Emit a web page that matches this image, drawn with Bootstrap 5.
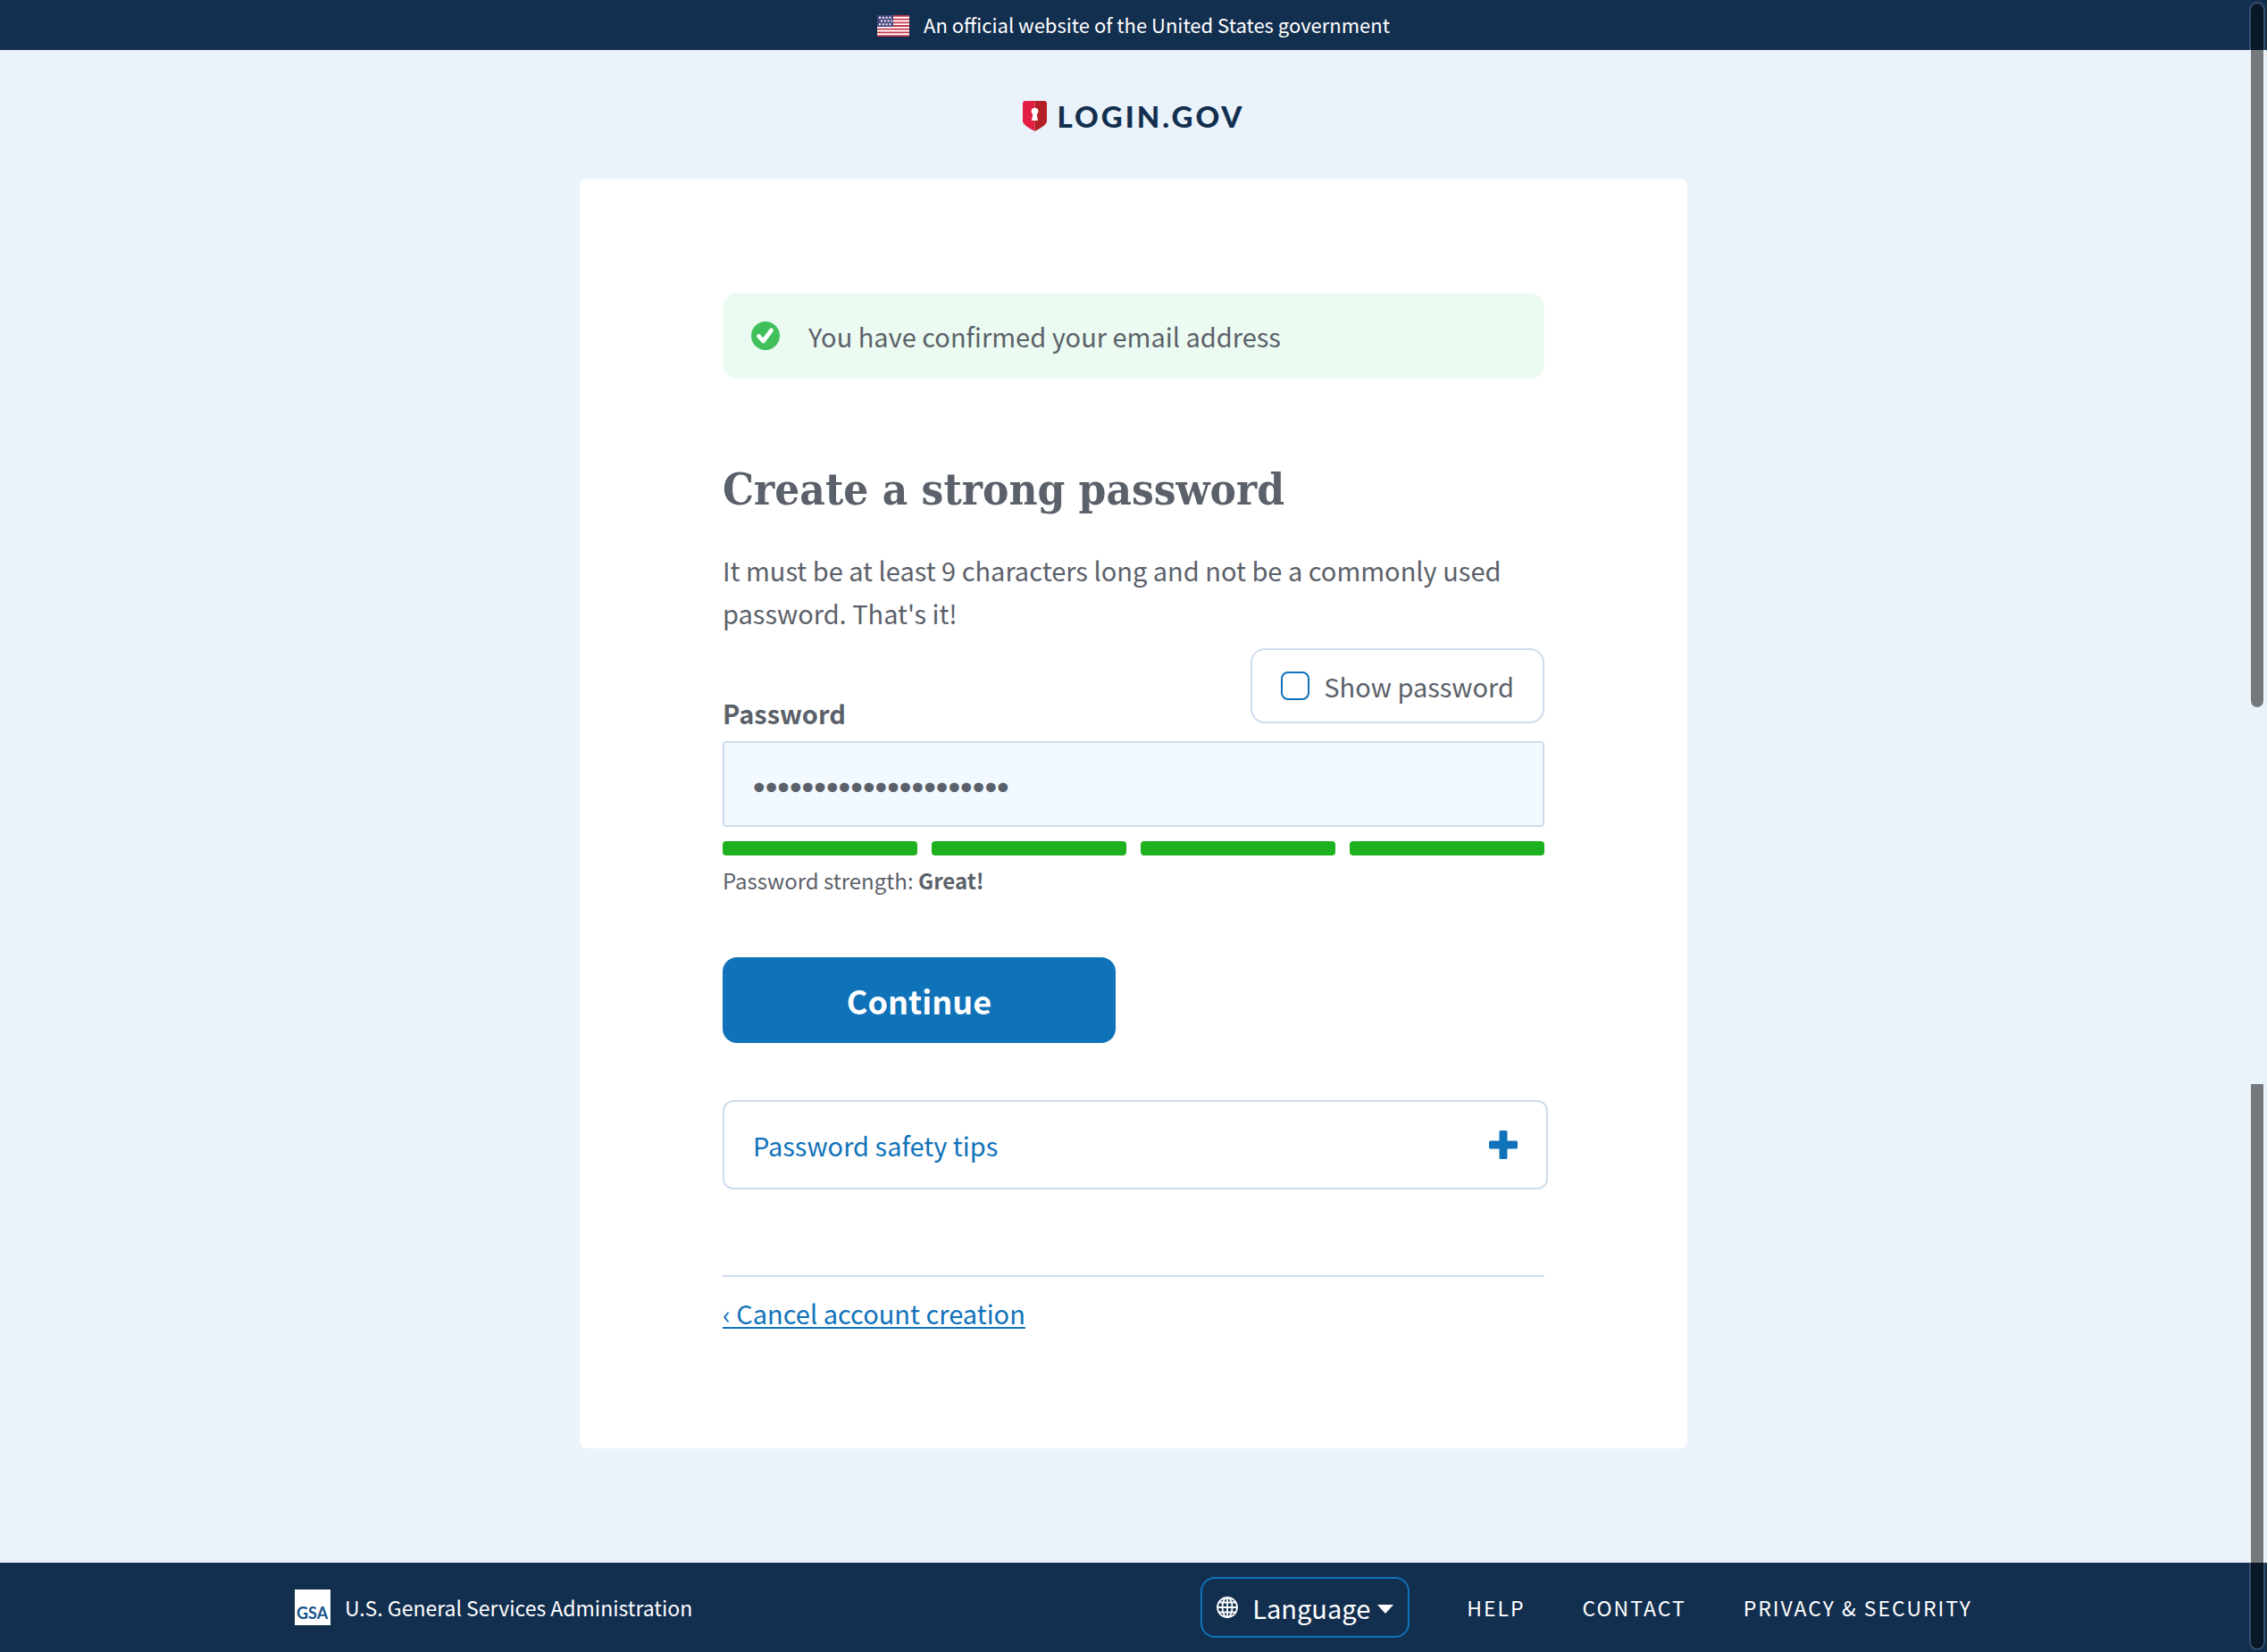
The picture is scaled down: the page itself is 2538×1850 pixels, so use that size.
<!DOCTYPE html>
<html lang="en">
<head>
<meta charset="utf-8">
<meta name="viewport" content="width=device-width, initial-scale=1">
<title>Create a strong password - Login.gov</title>
<link href="https://cdn.jsdelivr.net/npm/bootstrap@5.3.0/dist/css/bootstrap.min.css" rel="stylesheet">
<style>
  :root { --navy: #132f4f; --blue: #1072b9; --line: #cfdcec; --ink: #5b616a; }
  body { background: #eaf2fa; color: var(--ink); font-family: "Noto Sans CJK SC", "Open Sans", sans-serif; font-size: 29px; line-height: 48px; }
  .gov-banner { background: var(--navy); height: 56px; padding-bottom: 2px; font-size: 22px; line-height: 32px; gap: 16px; }
  .brand-bar { height: 144px; padding-top: 4px; gap: 12px; }
  .brand-name { font-family: Lato, sans-serif; font-weight: 900; font-size: 33px; line-height: 40px; letter-spacing: 3px; color: var(--navy); }
  .panel { max-width: 1240px; border-radius: 8px; padding: 128px 160px; margin-bottom: 128px; }
  .notice { background: #ebfbf1; border-radius: 16px; padding: 24px 32px; gap: 32px; margin-bottom: 88px; }
  h1 { font-family: "DejaVu Serif Condensed", "DejaVu Serif", serif; font-weight: 700; font-size: 49px; line-height: 72px; margin-bottom: 30px; }
  .intro { margin-bottom: 16px; }
  .show-toggle { border: 2px solid var(--line); border-radius: 16px; padding: 16px 32px; margin-bottom: 20px; gap: 16px; }
  .show-toggle .form-check-input { width: 32px; height: 32px; border: 2px solid var(--blue); border-radius: 8px; }
  .field-label { margin-bottom: 8px; }
  .pw-input, .pw-input:focus { background: #f2f9ff; border: 2px solid var(--line); border-radius: 4px; height: 96px; padding: 8px 32px 0; font-family: "Liberation Sans", Arial, sans-serif; font-size: 39px; color: var(--ink); }
  .meter { gap: 16px; margin: 16px 0 12px; }
  .meter span { height: 16px; border-radius: 4px; background: #1db11f; }
  .strength { font-size: 24px; line-height: 32px; margin-bottom: 70px; }
  .btn-continue, .btn-continue:hover { background: var(--blue); color: #fff; width: 440px; max-width: 100%; height: 96px; border-radius: 16px; font-size: 36px; line-height: 48px; font-weight: 700; }
  .tips { border: 2px solid var(--line); border-radius: 12px; width: calc(100% + 4px); height: 100px; padding: 0 32px; margin: 64px 0 96px; color: var(--blue); }
  .cancel { border-top: 2px solid var(--line); padding-top: 16px; }
  .cancel a { color: var(--blue); text-decoration-thickness: 2px; text-underline-offset: 3px; }
  .site-footer { background: var(--navy); min-height: 100px; font-size: 23px; line-height: 32px; }
  .footer-inner { max-width: 1878px; }
  .btn-lang, .btn-lang:hover { border: 2px solid var(--blue); border-radius: 16px; height: 68px; padding: 0 16px; color: #fff; font-size: 29px; line-height: 40px; }
  .footer-links { gap: 64px; }
  .footer-links a { letter-spacing: 2px; }
  .thumb { right: 2px; width: 18px; border: 2px solid rgba(255,255,255,.15); background: rgba(0,0,0,.5); background-clip: padding-box; }
  .thumb-upper { top: 2px; height: 792px; border-radius: 9px; }
  .thumb-lower { top: 1214px; bottom: 2px; border-top: 0; border-radius: 0 0 9px 9px; }
</style>
<script src="https://cdn.jsdelivr.net/npm/bootstrap@5.3.0/dist/js/bootstrap.bundle.min.js"></script>
</head>
<body class="d-flex flex-column min-vh-100 position-relative">
<div class="gov-banner d-flex align-items-center justify-content-center text-white">
  <svg class="mt-1" width="36" height="24" viewBox="0 0 36 24" aria-hidden="true">
    <path fill="#fff" d="M0 0h36v24H0z"/>
    <path stroke="#c8364c" stroke-width="1.8" d="M0 .9h36M0 4.6h36M0 8.3h36M0 12h36M0 15.7h36M0 19.4h36M0 23.1h36"/>
    <path fill="#46467f" d="M0 0h18v12.9H0z"/>
    <path stroke="#fff" stroke-width="2" stroke-dasharray="2 1.8" d="M2 2.800h14M4 6.500h13M2 10.200h14"/>
  </svg>
  <span>An official website of the United States government</span>
</div>
<header class="brand-bar d-flex align-items-center justify-content-center">
  <svg width="27" height="34" viewBox="0 0 27 34" aria-hidden="true">
    <path fill="#e21f42" d="M13.500 0H3Q0 0 0 3v20Q0 27 13.500 34z"/>
    <path fill="#b22025" d="M13.500 0H24q3 0 3 3v20q0 4-13.500 11z"/>
    <path fill="#fff" d="M10 22l1.300-7a4 4 0 1 1 4.400 0l1.300 7z"/>
  </svg>
  <span class="brand-name">LOGIN.GOV</span>
</header>
<main class="panel bg-white w-100 mx-auto">
  <div class="notice d-flex align-items-center" role="status">
    <svg width="32" height="32" viewBox="0 0 32 32" aria-hidden="true"><circle cx="16" cy="16" r="16" fill="#40bf5a"/><path d="M8.500 16.500l5 5.500 9-12" fill="none" stroke="#fff" stroke-width="4.800" stroke-linecap="round" stroke-linejoin="round"/></svg>
    <span>You have confirmed your email address</span>
  </div>
  <h1>Create a strong password</h1>
  <p class="intro">It must be at least 9 characters long and not be a commonly used password. That's it!</p>
  <form>
    <div class="d-flex justify-content-between align-items-end">
      <label class="field-label fw-bold" for="password">Password</label>
      <div class="show-toggle d-flex align-items-center">
        <input class="form-check-input m-0" type="checkbox" id="show">
        <label for="show">Show password</label>
      </div>
    </div>
    <input class="pw-input form-control" type="password" id="password" value="correcthorsebattery12">
    <div class="meter d-flex"><span class="flex-fill"></span><span class="flex-fill"></span><span class="flex-fill"></span><span class="flex-fill"></span></div>
    <p class="strength">Password strength: <strong>Great!</strong></p>
    <button class="btn btn-continue" type="button">Continue</button>
  </form>
  <button class="tips bg-white d-flex align-items-center justify-content-between" type="button">
    <span>Password safety tips</span>
    <svg width="32" height="32" viewBox="0 0 32 32" fill="#1072b9" aria-hidden="true"><rect x="11.500" width="9" height="32" rx="1.500"/><rect y="11.500" width="32" height="9" rx="1.500"/></svg>
  </button>
  <div class="cancel"><a href="#">‹ Cancel account creation</a></div>
</main>
<footer class="site-footer mt-auto d-flex align-items-center text-white">
  <div class="footer-inner w-100 mx-auto d-flex align-items-center justify-content-between">
    <a class="d-flex align-items-center gap-3 text-white text-decoration-none" href="#">
      <svg width="40" height="40" viewBox="0 0 40 40" aria-hidden="true"><path fill="#fff" d="M0 0h40v40H0z"/><text x="2" y="33" font-family="Lato, sans-serif" font-size="18" font-weight="700" fill="#15548b">GSA</text></svg>
      <span>U.S. General Services Administration</span>
    </a>
    <div class="footer-links d-flex align-items-center">
      <button class="btn btn-lang d-flex align-items-center" type="button">
        <svg class="me-3" width="24" height="24" viewBox="0 0 24 24" fill="none" stroke="#fff" stroke-width="1.800" aria-hidden="true"><circle cx="12" cy="12" r="11"/><ellipse cx="12" cy="12" rx="5.500" ry="11"/><path d="M12 1v22M1 12h22M2.500 6.500h19M2.500 17.500h19"/></svg>
        <span>Language</span>
        <svg class="ms-2 mt-1" width="18" height="10" viewBox="0 0 18 10" fill="#fff" aria-hidden="true"><path d="M0 0h18L9 10z"/></svg>
      </button>
      <a class="text-white text-decoration-none" href="#">HELP</a>
      <a class="text-white text-decoration-none" href="#">CONTACT</a>
      <a class="text-white text-decoration-none" href="#">PRIVACY &amp; SECURITY</a>
    </div>
  </div>
</footer>
<div class="thumb thumb-upper position-absolute"></div>
<div class="thumb thumb-lower position-absolute"></div>
</body>
</html>
